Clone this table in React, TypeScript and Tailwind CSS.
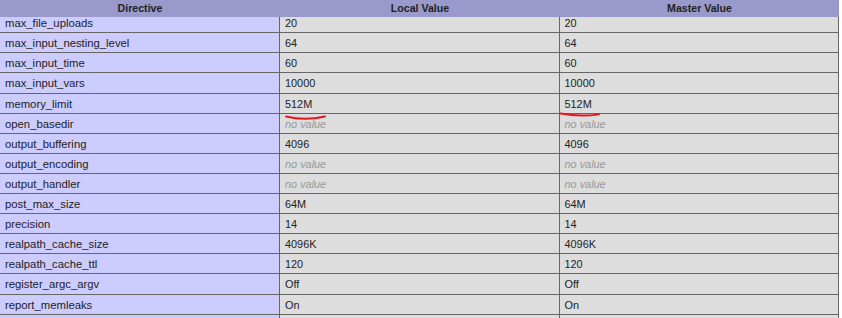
const rows: [string, string | null, string | null][] = [
  ["max_file_uploads", "20", "20"],
  ["max_input_nesting_level", "64", "64"],
  ["max_input_time", "60", "60"],
  ["max_input_vars", "10000", "10000"],
  ["memory_limit", "512M", "512M"],
  ["open_basedir", null, null],
  ["output_buffering", "4096", "4096"],
  ["output_encoding", null, null],
  ["output_handler", null, null],
  ["post_max_size", "64M", "64M"],
  ["precision", "14", "14"],
  ["realpath_cache_size", "4096K", "4096K"],
  ["realpath_cache_ttl", "120", "120"],
  ["register_argc_argv", "Off", "Off"],
  ["report_memleaks", "On", "On"],
  ["", "", ""],
];

function Val({ v }: { v: string | null }) {
  if (v === null) return <i className="text-[#999]">no value</i>;
  return <>{v}</>;
}

export default function App() {
  return (
    <div className="relative w-[842px] h-[318px] overflow-hidden bg-white text-[#222] font-['Liberation_Sans',Arial,sans-serif] text-[10.9px]">
      <div className="w-[839px]">
        <div className="relative z-10 grid grid-cols-[280px_280px_279px] h-[17px] bg-[#99c] font-bold text-[10.6px] leading-[17px]">
          <div className="text-center">Directive</div>
          <div className="text-center">Local Value</div>
          <div className="text-center">Master Value</div>
        </div>
        <div className="-mt-[3.8px]">
          {rows.map(([name, local, master], i) => (
            <div key={i} className="grid grid-cols-[280px_280px_279px] h-[20.1px] leading-[18px]">
              <div className="min-h-0 overflow-hidden bg-[#ccf] border-r border-b border-[#666] pl-[5px] pt-[1px] whitespace-nowrap text-[11.3px]">{name}</div>
              <div className="min-h-0 overflow-hidden bg-[#ddd] border-r border-b border-[#666] pl-[5px] pt-[1px] whitespace-nowrap">
                <Val v={local} />
              </div>
              <div className="min-h-0 overflow-hidden bg-[#ddd] border-r border-b border-[#666] pl-[4.5px] pt-[1px] whitespace-nowrap">
                <Val v={master} />
              </div>
            </div>
          ))}
        </div>
      </div>
      {/* hand drawn red marks */}
      <svg className="absolute left-0 top-0 pointer-events-none" width="842" height="318">
        <path d="M286 116.5 Q305 121 325 116.5" stroke="#e8141c" strokeWidth="1.8" fill="none" strokeLinecap="round" />
        <path d="M560.5 113.5 Q580 117 599 114.3" stroke="#e8141c" strokeWidth="1.8" fill="none" strokeLinecap="round" />
      </svg>
    </div>
  );
}
